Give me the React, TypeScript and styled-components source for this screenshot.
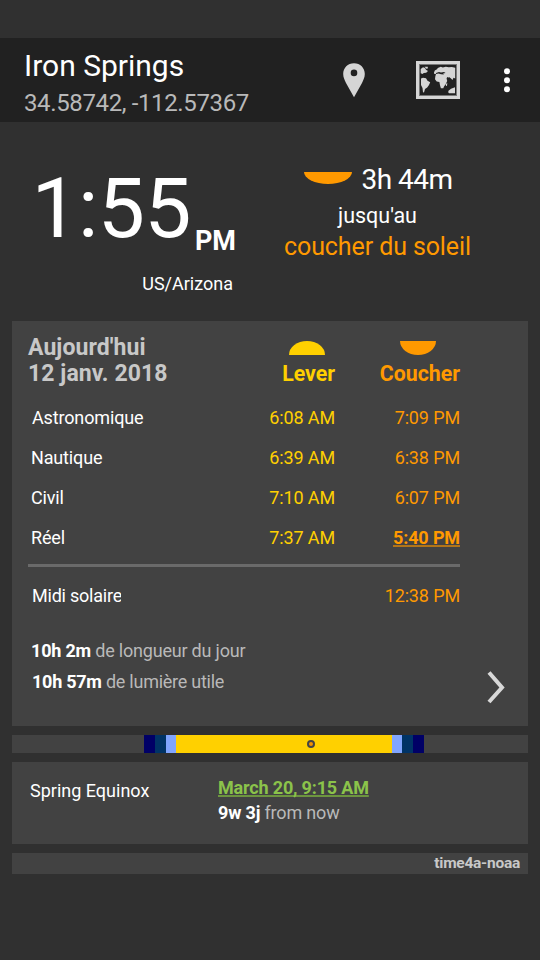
import React from "react";
import styled, { createGlobalStyle } from "styled-components";

const colors = {
  page: "#303030",
  bar: "#212121",
  card: "#424242",
  rise: "#ffd000",
  set: "#ff9900",
  muted: "#b9b9b9",
  accent: "#8bc34a",
};

const GlobalStyle = createGlobalStyle`
  * { box-sizing: border-box; }
  html, body { margin: 0; background: ${colors.page}; }
  body { font-family: Roboto, "Liberation Sans", sans-serif; color: #fff; overflow: hidden; }
  svg { display: block; }
`;

const Screen = styled.div`
  width: 540px;
  height: 960px;
  padding-top: 38px;
  background: ${colors.page};
  display: flex;
  flex-direction: column;
  white-space: pre;
`;

const AppBar = styled.header`
  height: 84px;
  flex: none;
  background: ${colors.bar};
  padding: 10px 28px 0 24px;
  display: flex;
`;
const Place = styled.div`
  width: 319px;
  display: flex;
  flex-direction: column;
  gap: 5px;
`;
const Title = styled.h1`
  margin: 0;
  font: 400 30px/36px Roboto, sans-serif;
`;
const Coordinates = styled.div`
  font-size: 24px;
  line-height: 28px;
  letter-spacing: -0.37px;
  color: ${colors.muted};
`;
const Actions = styled.div`
  display: flex;
  align-items: flex-start;
`;
const ActionButton = styled.button<{ $gap?: number; $top: number }>`
  border: 0;
  padding: 0;
  background: none;
  margin: ${(p) => p.$top}px 0 0 ${(p) => p.$gap ?? 0}px;
`;

const Hero = styled.section`
  height: 199px;
  flex: none;
  display: flex;
`;
const Clock = styled.div`
  width: 236px;
  padding-top: 37px;
  display: flex;
  flex-direction: column;
  align-items: flex-end;
`;
const ClockRow = styled.div`
  display: flex;
  height: 112px;
`;
const ClockTime = styled.div`
  font-size: 84px;
  line-height: 100px;
  letter-spacing: -0.6px;
  margin-right: 4px;
`;
const Meridiem = styled.div`
  font: 700 27px/32px Roboto, sans-serif;
  padding-top: 66px;
`;
const Zone = styled.div`
  font-size: 18px;
  line-height: 26px;
  padding-right: 3px;
`;
const NextEvent = styled.div`
  width: 283px;
  padding-top: 41px;
  display: flex;
  flex-direction: column;
  align-items: center;
`;
const Countdown = styled.div`
  display: flex;
  gap: 9px;
  font-size: 28px;
  line-height: 33px;
  letter-spacing: -0.5px;
  height: 37px;
  padding-left: 2px;
  svg { margin-top: 9px; }
`;
const Until = styled.div`
  font-size: 21.500px;
  line-height: 32px;
  height: 31px;
`;
const EventName = styled.div`
  font-size: 25px;
  line-height: 32px;
  letter-spacing: -0.1px;
  color: ${colors.set};
`;

const Card = styled.section<{ $height: number }>`
  margin: 0 12px 9px;
  height: ${(p) => p.$height}px;
  flex: none;
  background: ${colors.card};
`;
const TableHead = styled.div`
  height: 77px;
  padding: 14px 0 0 16px;
  display: flex;
`;
const DateLabel = styled.div`
  width: 196px;
  font: 700 23px/26px Roboto, sans-serif;
  letter-spacing: 0.08px;
  color: #c8c8c8;
`;
const ColumnHead = styled.div<{ $color: string; $width: number; $inset: number }>`
  width: ${(p) => p.$width}px;
  padding-top: 6px;
  display: flex;
  flex-direction: column;
  align-items: flex-end;
  font: 700 21.300px/26px Roboto, sans-serif;
  color: ${(p) => p.$color};
  svg { margin: 0 ${(p) => p.$inset}px 6px 0; }
`;
const TimeRow = styled.div<{ $height?: number }>`
  display: grid;
  grid-template-columns: 187px 116px 125px;
  align-items: center;
  height: ${(p) => p.$height ?? 40}px;
  padding-left: 20px;
  font-size: 18px;
  line-height: 24px;
`;
const RowLabel = styled.span<{ $shift?: number; $spacing?: number; $width?: number }>`
  margin-left: ${(p) => p.$shift ?? 0}px;
  width: ${(p) => (p.$width ? `${p.$width}px` : "auto")};
  overflow: hidden;
  letter-spacing: ${(p) => p.$spacing ?? -0.15}px;
`;
const Time = styled.span<{ $kind: "rise" | "set"; $next?: boolean }>`
  text-align: right;
  letter-spacing: -0.13px;
  color: ${(p) => colors[p.$kind]};
  font-weight: ${(p) => (p.$next ? 700 : 400)};
  text-decoration: ${(p) => (p.$next ? "underline" : "none")};
  text-underline-offset: 1px;
  text-decoration-thickness: ${(p) => (p.$next ? "2px" : "auto")};
  text-decoration-color: #b27419;
`;
const Divider = styled.hr`
  margin: 6px 68px 8px 16px;
  border: 0;
  height: 3px;
  background: #6a6a6a;
`;
const Summary = styled.div`
  display: flex;
  justify-content: space-between;
  padding: 19px 23px 0 19px;
  svg { margin-top: 36px; }
`;
const Durations = styled.div`
  font-size: 18px;
  line-height: 31px;
  letter-spacing: -0.2px;
  color: ${colors.muted};
  b { color: #fff; }
`;
const UsefulLight = styled.div`
  width: 191.5px;
  margin-left: 1px;
  letter-spacing: -0.25px;
  overflow: hidden;
`;

const DayBar = styled(Card)`
  display: flex;
`;
const Phase = styled.div<{ $width: number; $color: string }>`
  width: ${(p) => p.$width}px;
  background: ${(p) => p.$color};
  display: flex;
  align-items: center;
`;
const NowMarker = styled.div`
  width: 8px;
  height: 8px;
  margin-left: 131px;
  border: 2px solid #444;
  border-radius: 50%;
  background: #f39200;
`;

const Equinox = styled(Card)`
  display: flex;
  padding: 13px 0 0 18px;
  font-size: 18px;
  line-height: 25px;
`;
const EquinoxName = styled.div`
  width: 188px;
  padding-top: 3px;
`;
const EquinoxInfo = styled.div`
  letter-spacing: -0.17px;
  color: ${colors.muted};
  b { color: #fff; }
`;
const EquinoxDate = styled.div`
  font-weight: 700;
  color: ${colors.accent};
  text-decoration: underline 2px #6d953f;
  text-underline-offset: 1px;
  text-decoration-skip-ink: none;
`;
const Source = styled(Card)`
  padding-right: 8px;
  text-align: right;
  font: 700 15.5px/21px Roboto, sans-serif;
  letter-spacing: -0.25px;
  color: #c8c8c8;
`;

const PinIcon = () => (
  <svg width="22" height="35" viewBox="0 0 22 35">
    <path fill="#d5d5d5" fillRule="evenodd" d="M11 .3C4.7.3.2 5 .2 11c0 3.300 1.400 6 2.800 9L11 34.300 19 20c1.400-3 2.800-5.700 2.800-9C21.800 5 17.300.3 11 .3Zm0 6.300a3.300 3.300 0 1 1 0 6.600 3.300 3.300 0 0 1 0-6.600Z" />
  </svg>
);

const MapIcon = () => (
  <svg width="44" height="38" viewBox="0 0 44 38">
    <rect x="1.500" y="1.500" width="41" height="35" fill="none" stroke="#d5d5d5" strokeWidth="3" />
    <rect x="3.500" y="3.500" width="37" height="31" fill="none" stroke="#777" strokeWidth="1" />
    <g fill="#d5d5d5">
      <path d="m4.700 8 2.300-1.800 2 .8 1 1.700 2 1.300-1.800 1.700-2.400.3L6.500 13l-1.800-.8ZM8.500 5.800h3.300v1.700l-1.500.3Z" />
      <path d="m5 17.500 2-.8 3 .6 1.500 2.400 2.700 1.500L13 24l-1.800 2.500-2.200 1.500L8 31.500l-1-.3L6.500 27 5 24Z" />
      <path d="m18 11.500.8-2L21 8.300l.8-1.300 3-1.300 2 .8 3-.8 3 .5 3-.3 3.400.8V17.500l-1.700-.8-1 2.300-1.500-1.500-1.500-1.300-1.300.3-1-.5-.6 1.500.6 2.500-1.700 3.500-1.500 2-.7 1.700h-2.400l-.9-3-.6-3.200-2.700-.5-1.700-2.200.3-2.700L20 13l-2-.3Z" />
      <path d="m29.800 23 1.500-1-.3 2.700-1 .3ZM32.500 29.800l2.500-2 4-1.500v6h-6l-.8-1Z" />
    </g>
    <path d="m20 12 3-1 2 .5 3-.5 1.500 1-2.500.5 1 1-3-.3-2.500-.6-2.500.3Z" fill="#212121" />
  </svg>
);

const MoreIcon = () => (
  <svg width="6" height="25" viewBox="0 0 6 25" fill="#fff">
    <circle cx="3" cy="3.200" r="3" />
    <circle cx="3" cy="12.200" r="3" />
    <circle cx="3" cy="21.200" r="3" />
  </svg>
);

const HalfSun = ({ rising, width, height, color }: { rising?: boolean; width: number; height: number; color: string }) => (
  <svg width={width} height={height}>
    <ellipse cx={width / 2} cy={rising ? height : 0} rx={width / 2} ry={height} fill={color} />
  </svg>
);

const Chevron = () => (
  <svg width="18" height="33" viewBox="0 0 18 33" fill="none" stroke="#d8d8d8" strokeWidth="4">
    <path d="M2 1.500 15 16.500 2 31" />
  </svg>
);

const rows = [
  { label: "Astronomique", rise: "6:08 AM", set: "7:09 PM", width: 111.5 },
  { label: "Nautique", rise: "6:39 AM", set: "6:38 PM", shift: -1 },
  { label: "Civil", rise: "7:10 AM", set: "6:07 PM", shift: -1 },
  { label: "Réel", rise: "7:37 AM", set: "5:40 PM", shift: -1, next: true },
];

export default function App() {
  return (
    <Screen>
      <GlobalStyle />
      <AppBar>
        <Place>
          <Title>Iron Springs</Title>
          <Coordinates>34.58742, -112.57367</Coordinates>
        </Place>
        <Actions>
          <ActionButton $top={15} aria-label="Location"><PinIcon /></ActionButton>
          <ActionButton $top={13} $gap={51} aria-label="Map"><MapIcon /></ActionButton>
          <ActionButton $top={20} $gap={44} aria-label="More"><MoreIcon /></ActionButton>
        </Actions>
      </AppBar>
      <Hero>
        <Clock>
          <ClockRow>
            <ClockTime>1:55</ClockTime>
            <Meridiem>PM</Meridiem>
          </ClockRow>
          <Zone>US/Arizona</Zone>
        </Clock>
        <NextEvent>
          <Countdown>
            <HalfSun width={48} height={12} color={colors.set} />
            <span>3h 44m</span>
          </Countdown>
          <Until>jusqu'au</Until>
          <EventName>coucher du soleil</EventName>
        </NextEvent>
      </Hero>
      <Card $height={405}>
        <TableHead>
          <DateLabel>{"Aujourd'hui\n12 janv. 2018"}</DateLabel>
          <ColumnHead $width={111} $inset={10} $color={colors.rise}>
            <HalfSun rising width={36} height={14} color={colors.rise} />
            Lever
          </ColumnHead>
          <ColumnHead $width={125} $inset={24} $color={colors.set}>
            <HalfSun width={36} height={14} color={colors.set} />
            Coucher
          </ColumnHead>
        </TableHead>
        {rows.map((r) => (
          <TimeRow key={r.label}>
            <RowLabel $shift={r.shift} $width={r.width}>{r.label}</RowLabel>
            <Time $kind="rise">{r.rise}</Time>
            <Time $kind="set" $next={r.next}>{r.set}</Time>
          </TimeRow>
        ))}
        <Divider />
        <TimeRow $height={41}>
          <RowLabel $spacing={-0.22} $width={89}>Midi solaire</RowLabel>
          <span />
          <Time $kind="set">12:38 PM</Time>
        </TimeRow>
        <Summary>
          <Durations>
            <div><b>10h 2m</b> de longueur du jour</div>
            <UsefulLight><b>10h 57m</b> de lumière utile</UsefulLight>
          </Durations>
          <Chevron />
        </Summary>
      </Card>
      <DayBar $height={18}>
        <Phase $width={132} $color={colors.card} />
        <Phase $width={11} $color="#000066" />
        <Phase $width={11} $color="#003366" />
        <Phase $width={10} $color="#80a5ff" />
        <Phase $width={216} $color={colors.rise}><NowMarker /></Phase>
        <Phase $width={10} $color="#80a5ff" />
        <Phase $width={11} $color="#003366" />
        <Phase $width={11} $color="#000066" />
      </DayBar>
      <Equinox $height={82}>
        <EquinoxName>Spring Equinox</EquinoxName>
        <EquinoxInfo>
          <EquinoxDate>March 20, 9:15 AM</EquinoxDate>
          <div><b>9w 3j</b> from now</div>
        </EquinoxInfo>
      </Equinox>
      <Source $height={21}>time4a-noaa</Source>
    </Screen>
  );
}
